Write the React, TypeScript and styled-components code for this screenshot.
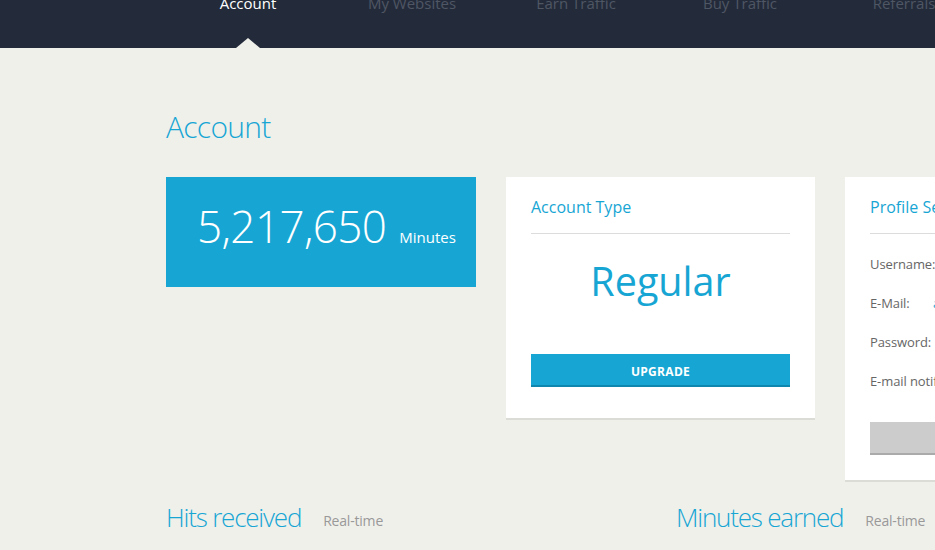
import styled, { createGlobalStyle } from "styled-components";

const GlobalStyle = createGlobalStyle`
  html, body {
    margin: 0;
    padding: 0;
    overflow: hidden;
    background: #f0f0eb;
    font-family: "Open Sans", "Liberation Sans", sans-serif;
  }
`;

const blue = "#17a6d4";

const TopBar = styled.header`
  height: 48px;
  background: #232b3a;
  overflow: hidden;
`;

const NavList = styled.nav`
  display: flex;
  margin-left: 166px;
  width: 990px;
`;

const NavItem = styled.div<{ $active?: boolean }>`
  position: relative;
  width: 164px;
  height: 48px;
  flex-shrink: 0;
  text-align: center;
  font-size: 15px;
  line-height: 20px;
  color: ${({ $active }) => ($active ? "#ffffff" : "#4f5664")};
  white-space: nowrap;

  span {
    display: block;
    margin-top: -7px;
  }
`;

const Pointer = styled.i`
  position: absolute;
  left: 50%;
  bottom: 0;
  margin-left: -12px;
  width: 0;
  height: 0;
  border-left: 12px solid transparent;
  border-right: 12px solid transparent;
  border-bottom: 10px solid #f0f0eb;
`;

const Main = styled.main`
  margin-left: 166px;
  width: 990px;
  padding-top: 59px;
`;

const PageTitle = styled.h1`
  margin: 0;
  font-size: 30px;
  line-height: 40px;
  font-weight: 300;
  letter-spacing: -0.7px;
  color: ${blue};
`;

const CardRow = styled.div`
  display: grid;
  grid-template-columns: 310px 309px 310px;
  gap: 30px;
  align-items: start;
  margin-top: 30px;
`;

const Balance = styled.div`
  height: 110px;
  box-sizing: border-box;
  background: ${blue};
  color: #fff;
  padding: 24px 0 0 31px;
  display: flex;
  align-items: baseline;
  gap: 13px;
`;

const BalanceNumber = styled.span`
  font-size: 44px;
  line-height: 50px;
  font-weight: 300;
  letter-spacing: -0.6px;
`;

const BalanceUnit = styled.span`
  font-size: 15px;
  font-weight: 400;
`;

const Card = styled.section`
  background: #fff;
  border-bottom: 2px solid #dcdcd6;
  padding: 19px 25px 31px;
  overflow: hidden;
`;

const CardTitle = styled.h2`
  margin: 0;
  font-size: 16px;
  line-height: 22px;
  font-weight: 400;
  color: ${blue};
  white-space: nowrap;
  padding-bottom: 15px;
  border-bottom: 1px solid #dcdcdc;
`;

const PlanName = styled.div`
  margin-top: 22px;
  text-align: center;
  font-size: 39.5px;
  line-height: 50px;
  color: ${blue};
`;

const Button = styled.button<{ $muted?: boolean }>`
  display: block;
  width: 100%;
  height: 33px;
  margin-top: ${({ $muted }) => ($muted ? "22px" : "48px")};
  border: 0;
  border-bottom: 2px solid ${({ $muted }) => ($muted ? "#aaaaaa" : "#0f86ad")};
  background: ${({ $muted }) => ($muted ? "#cccccc" : blue)};
  color: #fff;
  font-family: inherit;
  font-size: 12px;
  font-weight: 700;
  letter-spacing: 0.3px;
  padding: 3px 0 0;
`;

const ProfileCard = styled(Card)`
  padding-bottom: 25px;
  width: 310px;
  box-sizing: border-box;
`;

const FieldList = styled.div`
  margin-top: 10px;
`;

const Field = styled.div`
  display: grid;
  grid-template-columns: 63px 1fr;
  height: 39px;
  align-items: center;
  font-size: 13px;
  white-space: nowrap;
`;

const FieldLabel = styled.span`
  color: #666;
  letter-spacing: -0.1px;
`;

const FieldValue = styled.span`
  color: ${blue};
`;

const StatsRow = styled.div`
  display: grid;
  grid-template-columns: 480px 480px;
  gap: 30px;
  margin-top: 17px;
`;

const StatsHead = styled.div`
  display: flex;
  align-items: baseline;
  gap: 22px;
`;

const StatsTitle = styled.h3`
  margin: 0;
  font-size: 26px;
  line-height: 36px;
  font-weight: 300;
  letter-spacing: -1.2px;
  color: ${blue};
`;

const StatsNote = styled.span`
  font-size: 14px;
  letter-spacing: -0.2px;
  color: #999;
  position: relative;
  top: -1px;
`;

const navItems = ["Account", "My Websites", "Earn Traffic", "Buy Traffic", "Referrals", "Support"];

export default function App() {
  const fields = [
    { label: "Username:", value: "" },
    { label: "E-Mail:", value: "admin@example.com" },
    { label: "Password:", value: "" },
    { label: "E-mail notifications:", value: "" },
  ];

  return (
    <>
      <GlobalStyle />
      <TopBar>
        <NavList>
          {navItems.map((item, index) => (
            <NavItem key={item} $active={index === 0}>
              <span>{item}</span>
              {index === 0 && <Pointer />}
            </NavItem>
          ))}
        </NavList>
      </TopBar>

      <Main>
        <PageTitle>Account</PageTitle>

        <CardRow>
          <Balance>
            <BalanceNumber>5,217,650</BalanceNumber>
            <BalanceUnit>Minutes</BalanceUnit>
          </Balance>

          <Card>
            <CardTitle>Account Type</CardTitle>
            <PlanName>Regular</PlanName>
            <Button>UPGRADE</Button>
          </Card>

          <ProfileCard>
            <CardTitle>Profile Settings</CardTitle>
            <FieldList>
              {fields.map((f) => (
                <Field key={f.label}>
                  <FieldLabel>{f.label}</FieldLabel>
                  <FieldValue>{f.value}</FieldValue>
                </Field>
              ))}
            </FieldList>
            <Button $muted>SAVE</Button>
          </ProfileCard>
        </CardRow>

        <StatsRow>
          <StatsHead>
            <StatsTitle>Hits received</StatsTitle>
            <StatsNote>Real-time</StatsNote>
          </StatsHead>
          <StatsHead>
            <StatsTitle>Minutes earned</StatsTitle>
            <StatsNote>Real-time</StatsNote>
          </StatsHead>
        </StatsRow>
      </Main>
    </>
  );
}
